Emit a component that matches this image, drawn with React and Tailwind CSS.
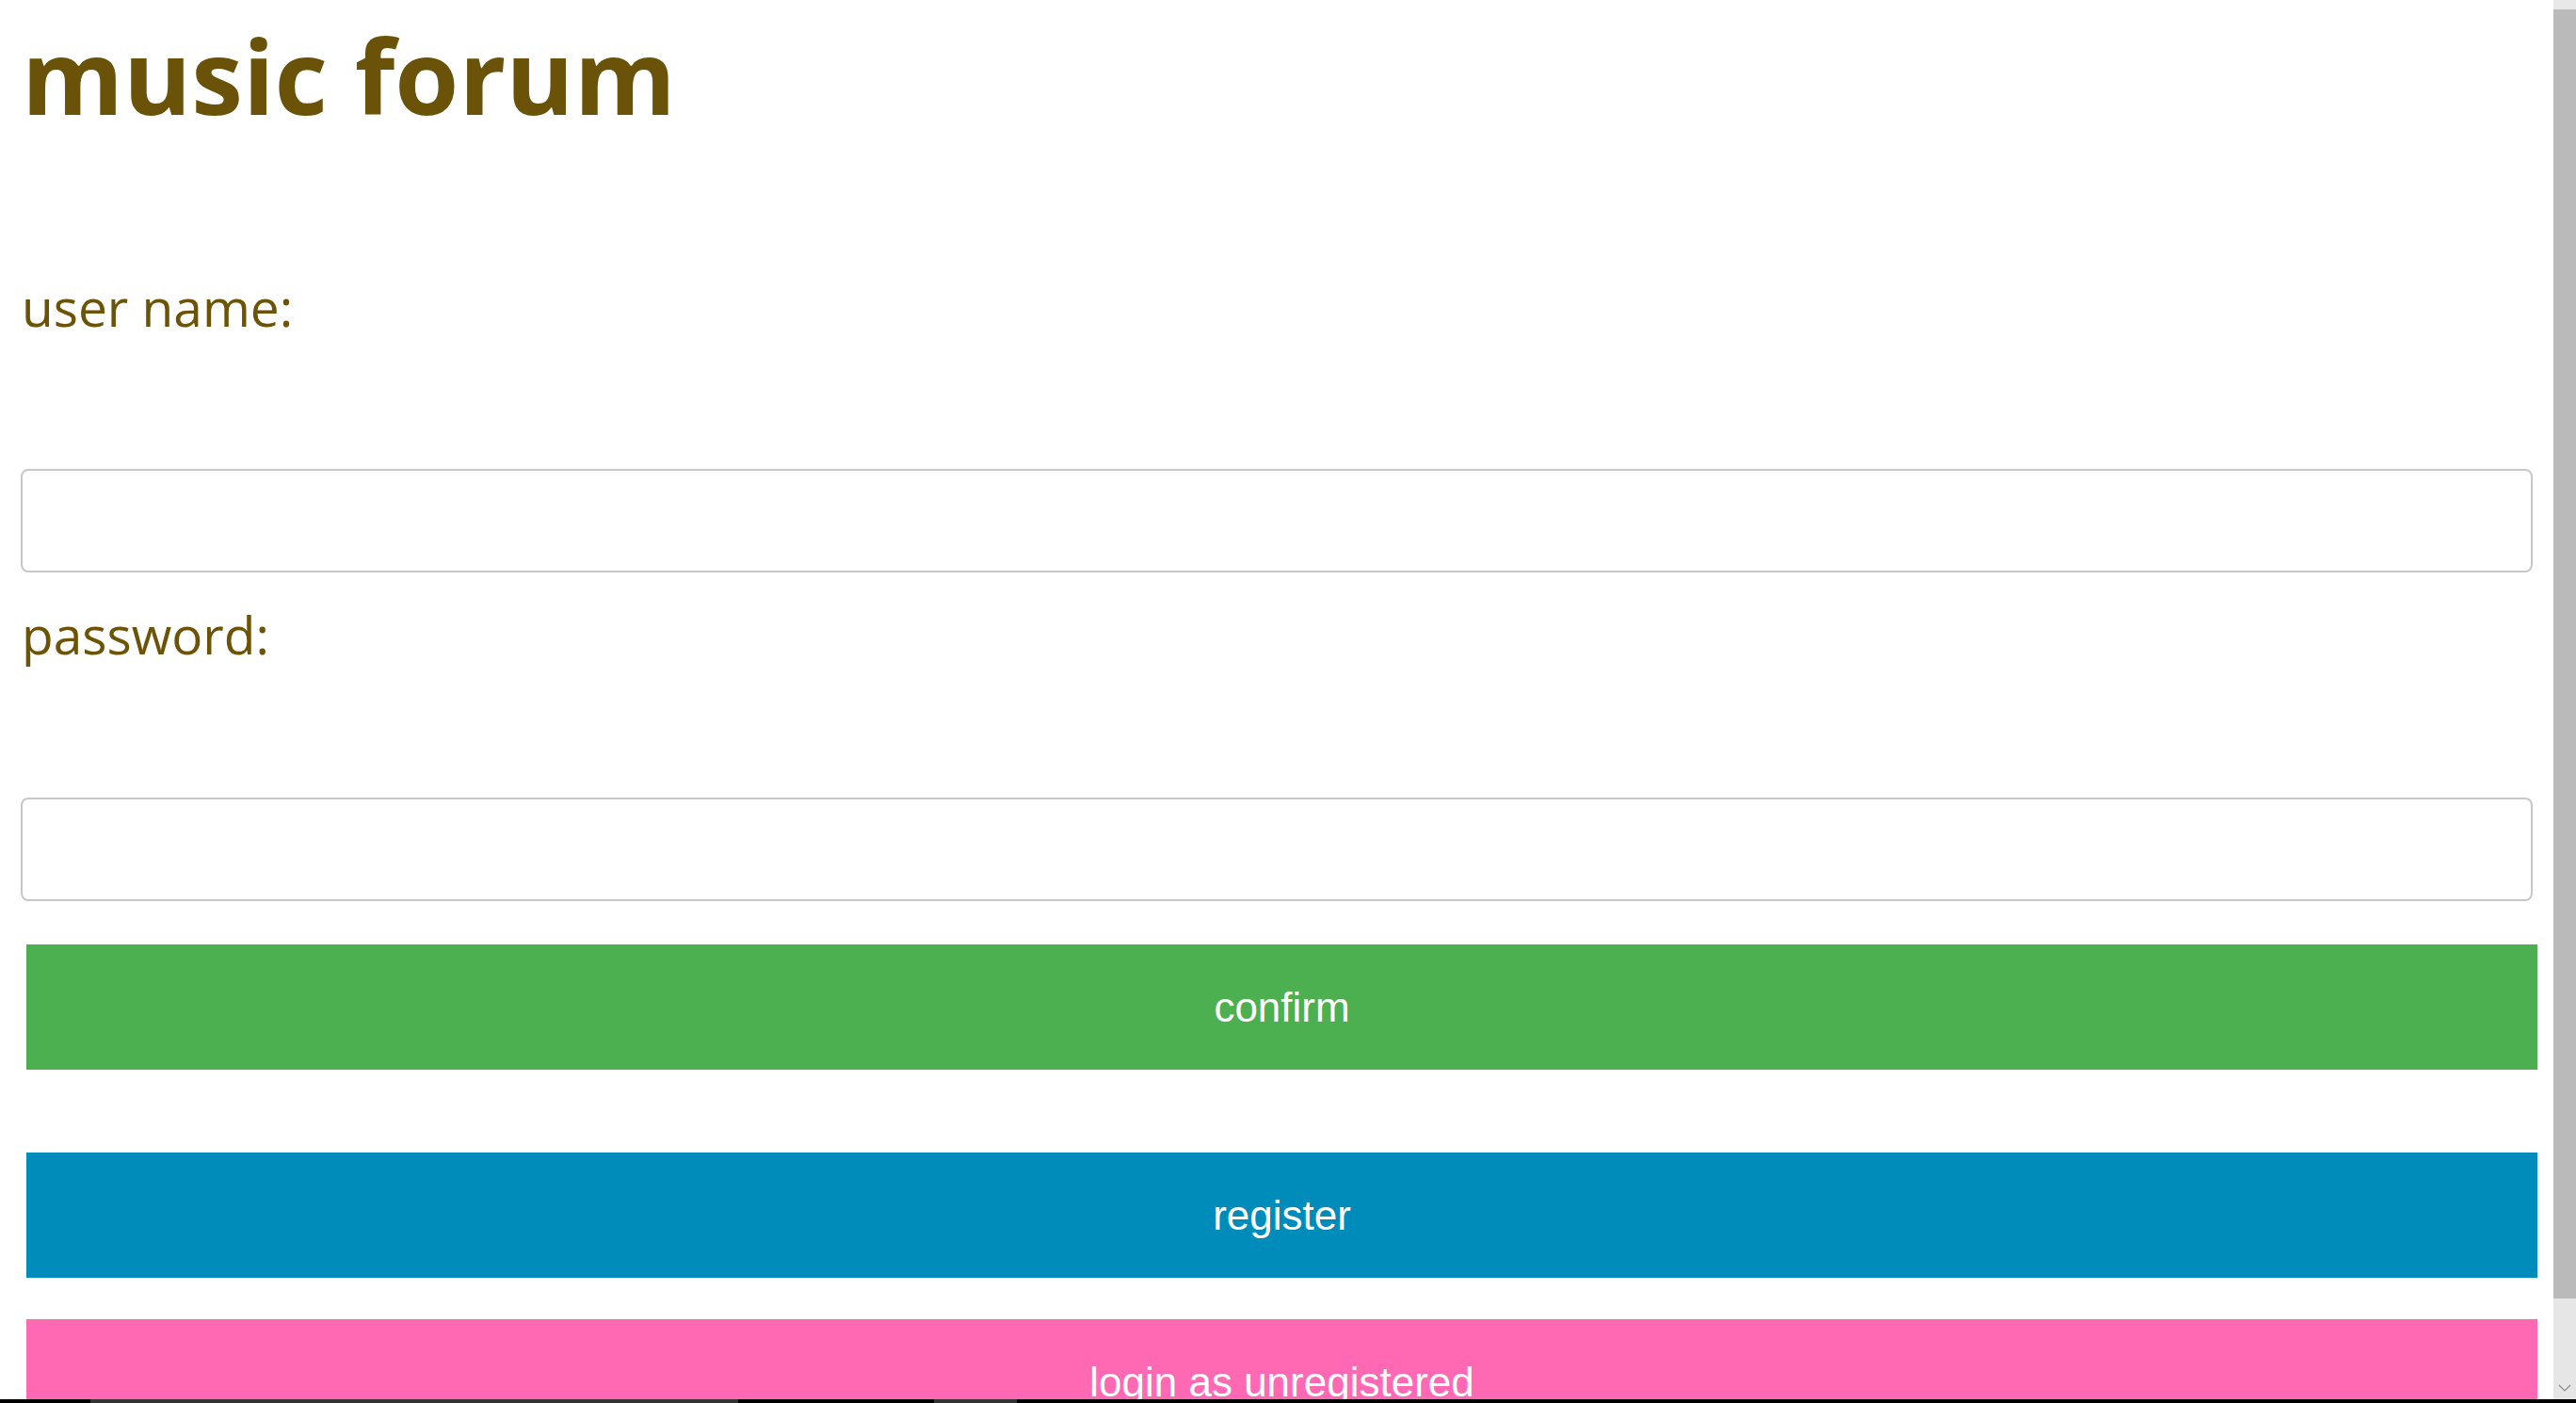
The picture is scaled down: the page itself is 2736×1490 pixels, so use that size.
export default function App() {
  const labelCls = "block text-[55px] leading-none text-[#6c5306] font-['Open_Sans',sans-serif]"
  const inputCls = "block -ml-px w-[2668px] h-[110px] border-2 border-[#c8c8c8] rounded-[8px] bg-white outline-none"
  const btnCls = "flex items-center justify-center ml-[5px] w-[2667px] h-[133px] text-white text-[44px] font-['Liberation_Sans',Arial,sans-serif]"

  return (
    <div className="relative flex h-[1490px] w-full overflow-hidden bg-white">
      <main className="flex-1 pl-[23px] pt-[24px]">
        <h1 className="text-[110px] leading-none font-bold text-[#6a5208] font-['Open_Sans',sans-serif]">
          music forum
        </h1>

        <label className={`${labelCls} mt-[164px]`}>user name:</label>
        <input type="text" className={`${inputCls} mt-[145px]`} />

        <label className={`${labelCls} mt-[38px]`}>password:</label>
        <input type="password" className={`${inputCls} mt-[146px]`} />

        <button className={`${btnCls} mt-[46px] h-[132px] bg-[#4caf50]`}>confirm</button>
        <button className={`${btnCls} mt-[88px] bg-[#008cba]`}>register</button>
        <button className={`${btnCls} mt-[44px] bg-[#ff69b4]`}>login as unregistered</button>
      </main>

      {/* scrollbar */}
      <div className="flex w-[24px] flex-col bg-[#e6e6e6]">
        <div className="h-[10px] bg-[#e8e8e8]" />
        <div className="h-[1369px] bg-[#bababa]" />
        <div className="flex flex-1 items-end justify-center pb-[12px]">
          <svg width="14" height="8" viewBox="0 0 14 8" fill="none">
            <path d="M1 1l6 6 6-6" stroke="#8a8a8a" strokeWidth="1.2" />
          </svg>
        </div>
      </div>

      {/* taskbar edge */}
      <div className="absolute bottom-0 left-0 flex h-[4px] w-full bg-black">
        <div className="w-[96px]" />
        <div className="w-[688px] bg-[#333333]" />
        <div className="w-[208px]" />
        <div className="w-[88px] bg-[#333333]" />
      </div>
    </div>
  )
}
